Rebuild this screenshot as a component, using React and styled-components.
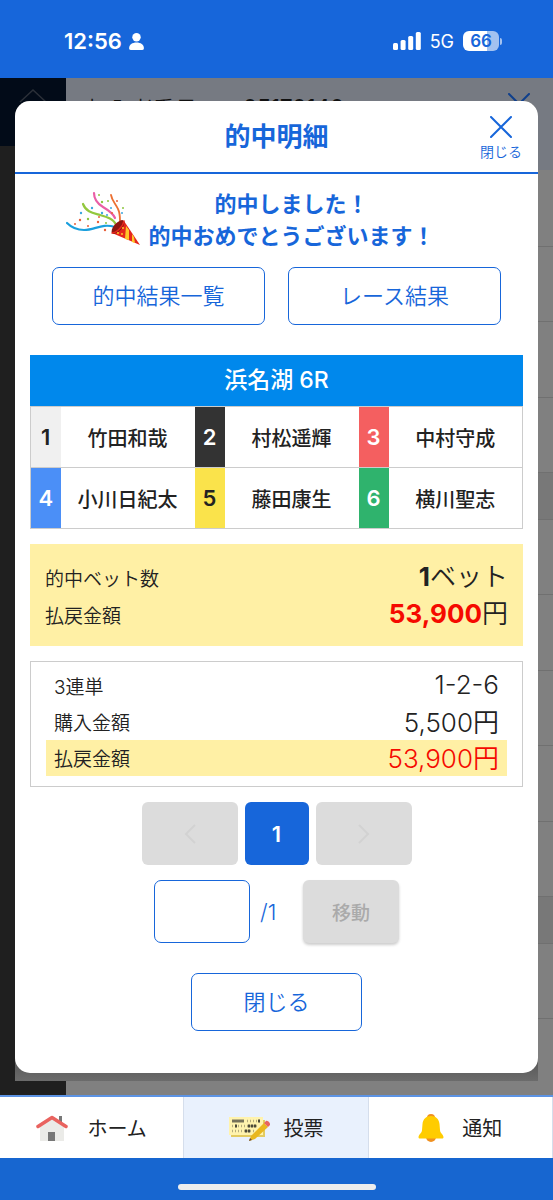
import React, { useState } from "react";
import styled, { createGlobalStyle } from "styled-components";

const GlobalStyle = createGlobalStyle`
  * {
    box-sizing: border-box;
  }

  body {
    margin: 0;
    color: #222;
    font-family: Inter, "Noto Sans CJK JP", sans-serif;
    font-size: 20px;
    font-weight: 350;
  }

  button,
  input {
    font-family: inherit;
  }
`;

const Page = styled.div`
  display: flex;
  flex-direction: column;
  min-height: 100vh;
  background: #1766da;
`;

const StatusBar = styled.header`
  display: flex;
  align-items: center;
  justify-content: space-between;
  height: 78px;
  padding: 4px 51px 0 64px;
  color: white;
  font-size: 22px;
  font-weight: 600;
`;

const StatusGroup = styled.div`
  display: flex;
  align-items: center;
  gap: ${(props) => props.$gap}px;
`;

const Network = styled.span`
  font-size: 18px;
  font-weight: 400;
`;

const Battery = styled.div`
  display: flex;
  align-items: center;
  gap: 1px;

  .level {
    width: 36px;
    border-radius: 6px;
    background: linear-gradient(90deg, white 66%, #a3c2f0 66%);
    color: #1766da;
    font-size: 17px;
    line-height: 20px;
    text-align: center;
  }

  .tip {
    width: 2px;
    height: 7px;
    border-radius: 0 2px 2px 0;
    background: #a3c2f0;
  }
`;

const Stage = styled.main`
  display: grid;
  flex: 1;

  > * {
    grid-area: 1 / 1;
  }
`;

const Behind = styled.div`
  display: grid;
  grid-template-columns: 66px 1fr;
  background: #808080;
`;

const Side = styled.div`
  background: #1f1f1f;
`;

const SideTop = styled.div`
  display: flex;
  justify-content: center;
  height: 68px;
  padding-top: 10px;
  background: #020b18;
`;

const BehindHead = styled.div`
  display: flex;
  align-items: flex-start;
  justify-content: space-between;
  height: 92px;
  padding: 15px 23px 0 21px;
  background: #767a82;
  color: #111;
  font-size: 22px;
  line-height: 32px;
`;

const Member = styled.div`
  display: flex;
  gap: 46px;

  b {
    font-weight: 500;
    line-height: 28px;
  }
`;

const BehindRow = styled.div`
  height: ${(props) => props.$height}px;
  border-bottom: 1px solid #707070;
  background: ${(props) => (props.$height < 50 ? "#787878" : "#808080")};
`;

const DialogShadow = styled.div`
  align-self: start;
  margin: 23px 15px 14px;
  padding-bottom: 8px;
  border-radius: 15px 15px 0 0;
  background: linear-gradient(0deg, #6b6b6b, #5c5c5c 16px);
  z-index: 1;
`;

const Dialog = styled.section`
  padding-bottom: 42px;
  border-radius: 15px;
  background: white;
`;

const DialogHead = styled.div`
  display: grid;
  grid-template-columns: 1fr auto 1fr;
  align-items: center;
  height: 73px;
  padding-right: 16px;
  padding-left: 16px;
  border-bottom: 2px solid #1766da;
`;

const Title = styled.h1`
  grid-column: 2;
  margin: 0;
  color: #1766da;
  font-size: 26px;
  line-height: 40px;
`;

const CloseIconButton = styled.button`
  display: flex;
  flex-direction: column;
  align-items: center;
  justify-self: end;
  gap: 4px;
  padding: 4px 0 0;
  border: 0;
  background: none;
  color: #1766da;
  font-size: 14px;
  font-weight: 350;
  line-height: 20px;
`;

const Body = styled.div`
  padding: 14px 15px 0;
`;

const Congrats = styled.div`
  display: flex;
  align-items: flex-end;
  justify-content: center;
  gap: 6px;
  padding-right: 52px;
  margin-bottom: 15px;
  color: #1766da;
  font-size: 22px;
  font-weight: 700;
  line-height: 32px;
  text-align: center;

  p {
    margin: 0;
  }
`;

const LinkRow = styled.div`
  display: flex;
  gap: 23px;
  margin: 0 22px 30px;
`;

const OutlineButton = styled.button`
  flex: ${(props) => (props.$width ? "none" : 1)};
  width: ${(props) => (props.$width ? props.$width + "px" : "auto")};
  height: 58px;
  padding: 0 0 5px;
  border: 1px solid #1766da;
  border-radius: 7px;
  background: white;
  color: #1766da;
  font-size: 22px;
  font-weight: 350;
`;

const RaceTable = styled.table`
  width: 100%;
  margin-bottom: 15px;
  border-collapse: collapse;
  table-layout: fixed;
  font-weight: 500;
  text-align: center;

  caption {
    background: #0088ec;
    color: white;
    font-size: 23px;
    line-height: 51px;
  }

  td,
  th {
    height: 61px;
    padding: 0;
    border: solid #ccc;
    border-width: 1px 0;
  }

  tr > :first-child {
    border-left-width: 1px;
  }

  tr > :last-child {
    border-right-width: 1px;
  }
`;

const BoatNumber = styled.th`
  width: 30px;
  background: ${(props) => props.$bg};
  color: ${(props) => props.$color};
  font-size: 22px;
  font-weight: 600;
`;

const Summary = styled.dl`
  margin: 0 0 15px;
  padding: 14px 15px;
  background: #fff0a5;
`;

const Row = styled.div`
  display: flex;
  align-items: center;
  justify-content: space-between;
  height: ${(props) => props.$height}px;

  dt {
    padding-top: 2px;
    font-size: 19px;
  }

  dd {
    margin: 0;
    padding-bottom: 4px;
    font-size: 26px;
  }

  .paid {
    color: #f50a00;
  }
`;

const Detail = styled.dl`
  margin: 0 0 15px;
  padding: 6px 15px 10px;
  border: 1px solid #ccc;
`;

const DetailRow = styled(Row)`
  padding: 0 8px 2px;
  background: ${(props) => (props.$marked ? "#fff0a5" : "none")};

  dt {
    padding-top: 0;
  }

  dd {
    padding-bottom: 2px;
    color: ${(props) => (props.$marked ? "#f50a00" : "inherit")};
  }
`;

const Pager = styled.nav`
  display: flex;
  justify-content: center;
  gap: 7px;
  margin-bottom: 15px;
`;

const PageButton = styled.button`
  display: flex;
  align-items: center;
  justify-content: center;
  width: ${(props) => (props.$current ? 64 : 96)}px;
  height: 63px;
  padding: 0;
  border: 0;
  border-radius: 6px;
  background: ${(props) => (props.$current ? "#1766da" : "#dcdcdc")};
  color: ${(props) => (props.$current ? "white" : "#d2d2d2")};
  font-size: 22px;
  font-weight: 600;
`;

const JumpForm = styled.form`
  display: flex;
  justify-content: center;
  margin-bottom: 30px;
  color: #1766da;
  font-size: 22px;

  label {
    display: flex;
    align-items: center;
    gap: 10px;
    width: 149px;
  }

  input {
    width: 96px;
    height: 63px;
    border: 1px solid #1766da;
    border-radius: 7px;
    color: #1766da;
    font-size: 22px;
    text-align: center;
  }
`;

const JumpButton = styled.button`
  width: 96px;
  height: 63px;
  border: 0;
  border-radius: 6px;
  background: #dcdcdc;
  box-shadow: 0 2px 3px rgba(0, 0, 0, 0.2);
  color: #aaa;
  font-size: 19px;
  font-weight: 500;
`;

const CloseRow = styled.div`
  display: flex;
  justify-content: center;
`;

const TabBar = styled.nav`
  display: grid;
  grid-template-columns: repeat(3, 1fr);
  height: 63px;
  border-top: 2px solid #5c93e4;
  background: white;
`;

const Tab = styled.a`
  display: flex;
  align-items: center;
  justify-content: center;
  gap: ${(props) => props.$gap}px;
  border-right: 1px solid #d5deec;
  background: ${(props) => (props.$active ? "#e9f1fd" : "white")};
  color: #222;
  font-weight: 400;
  text-decoration: none;
`;

const HomeArea = styled.footer`
  display: flex;
  align-items: center;
  justify-content: center;
  height: 42px;
  padding-top: 16px;
  background: #1766d0;

  &::after {
    content: "";
    width: 198px;
    height: 6px;
    border-radius: 3px;
    background: #ededed;
  }
`;

const boats = [
  [
    { no: 1, name: "竹田和哉", bg: "#f0f0f0", color: "#222" },
    { no: 2, name: "村松遥輝", bg: "#333", color: "white" },
    { no: 3, name: "中村守成", bg: "#f45f60", color: "white" },
  ],
  [
    { no: 4, name: "小川日紀太", bg: "#4b8ff7", color: "white" },
    { no: 5, name: "藤田康生", bg: "#fae34b", color: "#222" },
    { no: 6, name: "横川聖志", bg: "#2fb36d", color: "white" },
  ],
];

const behindRows = [77, 75, 76, 75, 47, 75, 76, 75, 76, 75, 47, 75];

function PersonIcon() {
  return (
    <svg width="17" height="19" viewBox="0 0 16 18" fill="white" aria-hidden="true">
      <circle cx="8" cy="5" r="4" />
      <path d="M1 15.500C1 12 4 10 8 10s7 2 7 5.500c0 1-.5 1.500-1.500 1.500h-11C1.500 17 1 16.500 1 15.500z" />
    </svg>
  );
}

function SignalIcon() {
  return (
    <svg width="28" height="18" viewBox="0 0 28 18" fill="white" aria-hidden="true">
      <rect x="0" y="11" width="5" height="7" rx="1.500" />
      <rect x="7.600" y="8" width="5" height="10" rx="1.500" />
      <rect x="15.200" y="4" width="5" height="14" rx="1.500" />
      <rect x="22.800" y="0" width="5" height="18" rx="1.500" />
    </svg>
  );
}

function CrossIcon({ color = "#1766da" }) {
  return (
    <svg width="22" height="22" viewBox="0 0 22 22" stroke={color} strokeWidth="2" strokeLinecap="round" aria-hidden="true">
      <path d="M1 1l20 20M21 1L1 21" />
    </svg>
  );
}

function ChevronIcon({ flip }) {
  return (
    <svg width="12" height="20" viewBox="0 0 12 20" fill="none" stroke="currentColor" strokeWidth="2" aria-hidden="true">
      <path d={flip ? "M1 1l9 9-9 9" : "M11 1l-9 9 9 9"} />
    </svg>
  );
}

function CrackerIcon() {
  return (
    <svg width="76" height="62" viewBox="0 0 76 62" fill="none" strokeLinecap="round" aria-hidden="true">
      <path d="M1 33c4 4 9 7 17 7 11 0 18-7 31-3" stroke="#1a9fdd" strokeWidth="2.200" />
      <path d="M17 14c3 8 10 9 17 11 7 2 14 4 16 10" stroke="#93c83e" strokeWidth="2.200" />
      <path d="M28 3c0 6 4 11 9 14 5 3 10 6 12 11" stroke="#ea5fa6" strokeWidth="2.200" />
      <path d="M45 5c1 6 5 9 7 14 2 4 2 8 2 12" stroke="#ec7032" strokeWidth="1.800" />
      <path d="M58 31L74 55 46 43z" fill="#e5261c" />
      <path d="M60 36l-1 13 4 1 0-10zM66 44l0 8 3 1-1-6z" fill="#ffc629" />
      <ellipse cx="52" cy="37" rx="4" ry="8.500" transform="rotate(42 52 37)" fill="#8f1510" />
      <path d="M46 43c4 0 11-6 12-12" stroke="#e5261c" strokeWidth="1.500" />
      <g fill="#ffc629">
        <circle cx="56" cy="44" r="1" />
        <circle cx="52" cy="43" r="1" />
        <circle cx="57" cy="38" r="1" />
      </g>
      <g fill="#e8603a">
        <circle cx="14" cy="30" r="1.200" />
        <circle cx="32" cy="32" r="1.200" />
        <circle cx="22" cy="36" r="1" />
        <circle cx="39" cy="40" r="1.200" />
        <circle cx="33" cy="27" r="1" />
        <circle cx="51" cy="11" r="1" />
        <circle cx="46" cy="23" r="1" />
        <circle cx="9" cy="34" r="1" />
      </g>
      <g fill="#8cc63f">
        <circle cx="22" cy="29" r="1.200" />
        <circle cx="36" cy="12" r="1.200" />
        <circle cx="33" cy="5" r="1" />
        <circle cx="42" cy="11" r="1" />
        <circle cx="57" cy="18" r="1" />
        <circle cx="40" cy="33" r="1" />
      </g>
      <g fill="#3ba7e0">
        <circle cx="15" cy="23" r="1.200" />
        <circle cx="26" cy="18" r="1.200" />
        <circle cx="36" cy="23" r="1.200" />
        <circle cx="45" cy="18" r="1" />
        <circle cx="41" cy="25" r="1" />
        <circle cx="56" cy="23" r="1" />
      </g>
    </svg>
  );
}

function HouseIcon() {
  return (
    <svg width="32" height="26" viewBox="0 0 32 26" fill="none" aria-hidden="true">
      <path d="M23 1h3v8h-3z" fill="#777" />
      <path d="M4 11L16 3l12 8v15H4z" fill="#ebebe8" />
      <path d="M12 17h7v9h-7z" fill="#777" />
      <path d="M2 11.500L16 2.500l14 9" stroke="#e9635f" strokeWidth="3.500" strokeLinecap="round" strokeLinejoin="round" />
    </svg>
  );
}

function TicketIcon() {
  return (
    <svg width="42" height="26" viewBox="0 0 42 26" fill="none" aria-hidden="true">
      <path d="M3 5h34v17H3z" fill="#e3cb60" />
      <path d="M1 2h34v18H1z" fill="#fff3ae" />
      <path d="M4 6h12" stroke="#77735a" strokeWidth="3" />
      <path d="M19 6h13M4 11h27M4 16h24" stroke="#b5ac7c" strokeWidth="2.500" strokeDasharray="1 2" />
      <path d="M7 11h2M20 11h8M17 16h5M30 6h2" stroke="#4b4938" strokeWidth="3" strokeDasharray="2 1" />
      <path d="M21 26l2-5L36 8l4 4-13 12z" fill="#e9b71f" />
      <path d="M36 8l2-2c1-1 5 2 4 4l-2 2z" fill="#e9635f" />
      <path d="M21 26l1-3 2 2z" fill="#6d4b3b" />
    </svg>
  );
}

function BellIcon() {
  return (
    <svg width="26" height="28" viewBox="0 0 26 28" aria-hidden="true">
      <circle cx="13" cy="4" r="4" fill="#f09020" />
      <circle cx="13" cy="23" r="5" fill="#f09020" />
      <path d="M13 2c-5 0-8 3-8.500 8L4 16c0 3-3 4-3.500 7 0 1 .5 1.500 1.500 1.500h22c1 0 1.500-.5 1.500-1.500-.5-3-3.500-4-3.500-7l-.5-6C21 5 18 2 13 2z" fill="#ffcc00" />
    </svg>
  );
}

function Background() {
  return (
    <Behind aria-hidden="true">
      <Side>
        <SideTop>
          <svg width="28" height="20" viewBox="0 0 28 20" fill="none" stroke="#2b3038" strokeWidth="1.500">
            <path d="M1 14L14 2l13 12" />
          </svg>
        </SideTop>
      </Side>
      <div>
        <BehindHead>
          <Member>
            加入者番号<b>05170140</b>
          </Member>
          <CrossIcon color="#0f3f8c" />
        </BehindHead>
        {behindRows.map((height, i) => (
          <BehindRow key={i} $height={height} />
        ))}
      </div>
    </Behind>
  );
}

function App() {
  const [page, setPage] = useState("");

  return (
    <Page>
      <GlobalStyle />
      <StatusBar>
        <StatusGroup $gap={6}>
          12:56
          <PersonIcon />
        </StatusGroup>
        <StatusGroup $gap={9}>
          <SignalIcon />
          <Network>5G</Network>
          <Battery>
            <div className="level">66</div>
            <div className="tip" />
          </Battery>
        </StatusGroup>
      </StatusBar>

      <Stage>
        <Background />
        <DialogShadow>
          <Dialog role="dialog" aria-labelledby="dialog-title">
            <DialogHead>
              <Title id="dialog-title">的中明細</Title>
              <CloseIconButton type="button">
                <CrossIcon />
                閉じる
              </CloseIconButton>
            </DialogHead>

            <Body>
              <Congrats>
                <CrackerIcon />
                <p>
                  的中しました！
                  <br />
                  的中おめでとうございます！
                </p>
              </Congrats>

              <LinkRow>
                <OutlineButton type="button">的中結果一覧</OutlineButton>
                <OutlineButton type="button">レース結果</OutlineButton>
              </LinkRow>

              <RaceTable>
                <caption>浜名湖 6R</caption>
                <tbody>
                  {boats.map((row) => (
                    <tr key={row[0].no}>
                      {row.map((boat) => (
                        <React.Fragment key={boat.no}>
                          <BoatNumber $bg={boat.bg} $color={boat.color}>
                            {boat.no}
                          </BoatNumber>
                          <td>{boat.name}</td>
                        </React.Fragment>
                      ))}
                    </tr>
                  ))}
                </tbody>
              </RaceTable>

              <Summary>
                <Row $height={37}>
                  <dt>的中ベット数</dt>
                  <dd>
                    <b>1</b>ベット
                  </dd>
                </Row>
                <Row $height={37}>
                  <dt>払戻金額</dt>
                  <dd>
                    <b className="paid">53,900</b>円
                  </dd>
                </Row>
              </Summary>

              <Detail>
                <DetailRow $height={36}>
                  <dt>3連単</dt>
                  <dd>1-2-6</dd>
                </DetailRow>
                <DetailRow $height={36}>
                  <dt>購入金額</dt>
                  <dd>5,500円</dd>
                </DetailRow>
                <DetailRow $height={36} $marked>
                  <dt>払戻金額</dt>
                  <dd>53,900円</dd>
                </DetailRow>
              </Detail>

              <Pager aria-label="ページ">
                <PageButton type="button" disabled aria-label="前へ">
                  <ChevronIcon />
                </PageButton>
                <PageButton type="button" $current>
                  1
                </PageButton>
                <PageButton type="button" disabled aria-label="次へ">
                  <ChevronIcon flip />
                </PageButton>
              </Pager>

              <JumpForm>
                <label>
                  <input inputMode="numeric" value={page} onChange={(e) => setPage(e.target.value)} />
                  /1
                </label>
                <JumpButton type="button" disabled>
                  移動
                </JumpButton>
              </JumpForm>

              <CloseRow>
                <OutlineButton type="button" $width={171}>
                  閉じる
                </OutlineButton>
              </CloseRow>
            </Body>
          </Dialog>
        </DialogShadow>
      </Stage>

      <TabBar>
        <Tab href="#home" $gap={19}>
          <HouseIcon />
          ホーム
        </Tab>
        <Tab href="#vote" $gap={13} $active>
          <TicketIcon />
          投票
        </Tab>
        <Tab href="#notice" $gap={18}>
          <BellIcon />
          通知
        </Tab>
      </TabBar>
      <HomeArea />
    </Page>
  );
}

export default App;
